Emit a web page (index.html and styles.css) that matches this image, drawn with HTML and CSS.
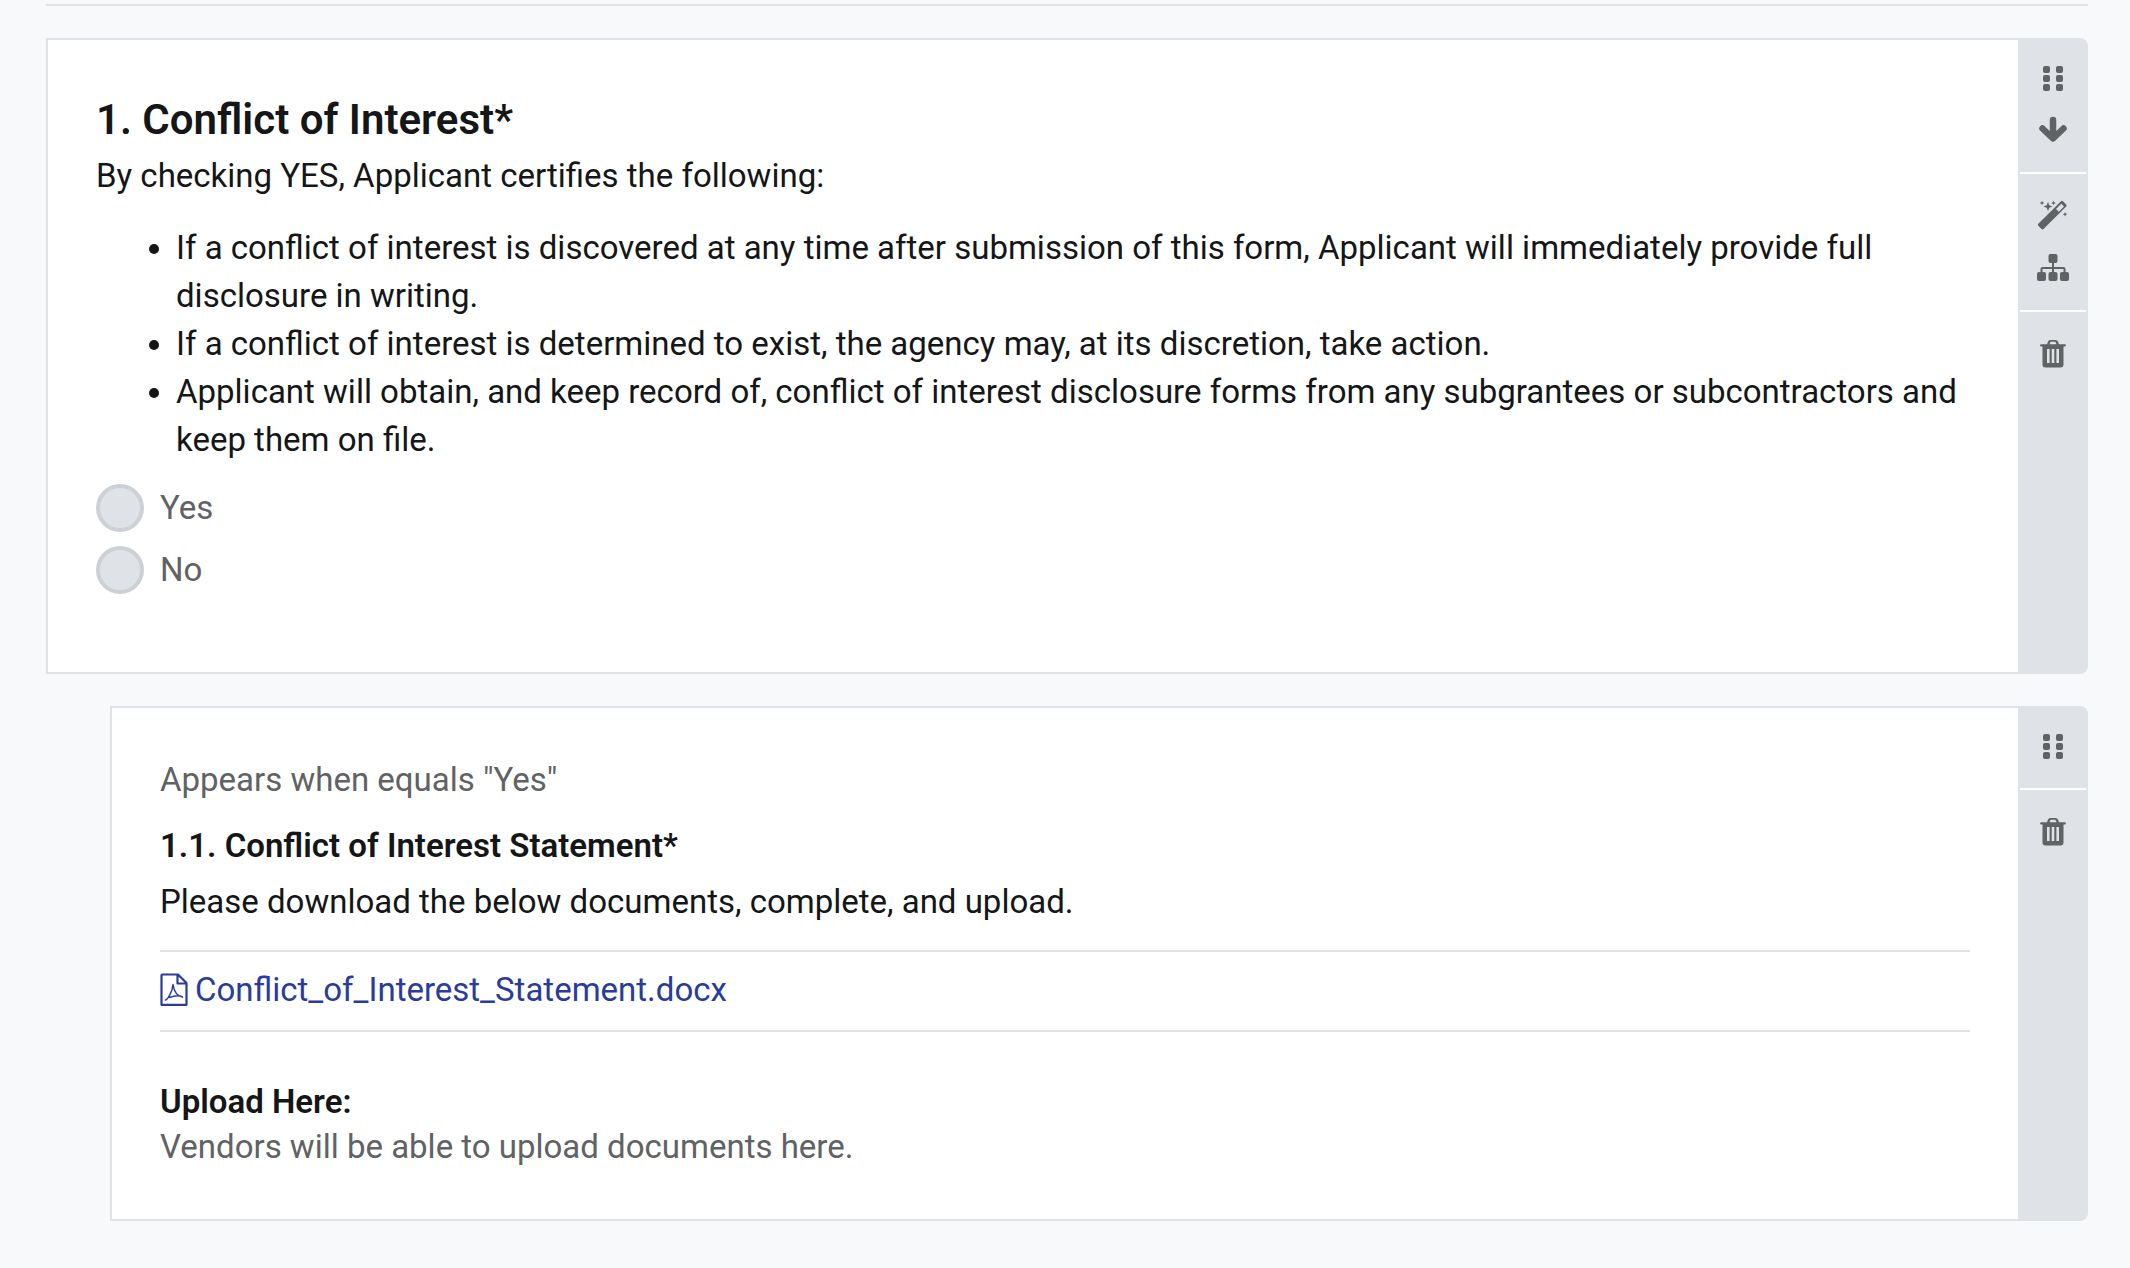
FILE: index.html
```html
<!DOCTYPE html>
<html lang="en">
<head>
  <meta charset="UTF-8">
  <meta name="viewport" content="width=device-width, initial-scale=1.0">
  <title>Questionnaire</title>
  <link rel="stylesheet" href="styles.css">
</head>
<body>
  <svg class="sprite" aria-hidden="true">
    <symbol id="icon-drag" viewBox="0 0 32 32">
      <rect x="6" y="4" width="7" height="7" rx="2"/>
      <rect x="19" y="4" width="7" height="7" rx="2"/>
      <rect x="6" y="13" width="7" height="7" rx="2"/>
      <rect x="19" y="13" width="7" height="7" rx="2"/>
      <rect x="6" y="22" width="7" height="7" rx="2"/>
      <rect x="19" y="22" width="7" height="7" rx="2"/>
    </symbol>
    <symbol id="icon-down" viewBox="0 0 32 32">
      <path fill="none" stroke="currentColor" stroke-width="6.500" stroke-linecap="round" stroke-linejoin="round" d="M16 6v17M5.500 14.500L16 24.500L26.500 14.500"/>
    </symbol>
    <symbol id="icon-magic" viewBox="0 0 32 32">
      <path fill-rule="evenodd" d="M24 1.300a1.500 1.500 0 0 1 2 0l3.200 3.200a1.500 1.500 0 0 1 0 2L6.500 29a1.500 1.500 0 0 1-2 0l-3.200-3.200a1.500 1.500 0 0 1 0-2zM19 8.900l2.800 2.800 5.200-5.300-2.700-2.700z"/>
      <path d="M11 2l1.300 3.200L15.500 6.500l-3.200 1.300L11 11l-1.300-3.200L6.500 6.500l3.200-1.300zM5 .7l.7 1.600 1.600.7-1.600.7L5 5.300 4.300 3.700l-1.600-.7 1.600-.7zM16.500.7l.7 1.600 1.600.7-1.600.7-.7 1.600-.7-1.600-1.600-.7 1.600-.7zM28 12l.7 1.600 1.600.7-1.600.7-.7 1.600-.7-1.600-1.600-.7 1.600-.7z"/>
    </symbol>
    <symbol id="icon-sitemap" viewBox="0 0 32 32">
      <rect x="11.500" y="2" width="9" height="9" rx="2"/>
      <rect x="0" y="20" width="9" height="9" rx="2"/>
      <rect x="11.500" y="20" width="9" height="9" rx="2"/>
      <rect x="23" y="20" width="9" height="9" rx="2"/>
      <path d="M15 10h2v5h9.500a2 2 0 0 1 2 2v4h-2v-4H17v4h-2v-4H5.500v4h-2v-4a2 2 0 0 1 2-2H15z"/>
    </symbol>
    <symbol id="icon-trash" viewBox="0 0 32 32">
      <path fill-rule="evenodd" d="M10 6.200l1-2.700A2.500 2.500 0 0 1 13.300 2h5.400a2.500 2.500 0 0 1 2.300 1.500l1 2.700h6a.8.800 0 0 1 .8.800v.8a.8.800 0 0 1-.8.800H26.500V26.500A3 3 0 0 1 23.500 29.500h-15a3 3 0 0 1-3-3V8.600H4a.8.800 0 0 1-.8-.8V7a.8.800 0 0 1 .8-.8zM12.500 6.200h7l-.8-2a.7.700 0 0 0-.6-.4h-4.200a.7.700 0 0 0-.6.400zM10 11v14h2.600V11zM14.700 11v14h2.600V11zM19.400 11v14H22V11z"/>
    </symbol>
    <symbol id="icon-pdf" viewBox="0 0 28 34">
      <path fill="none" stroke="currentColor" stroke-width="2.200" stroke-linejoin="round" d="M2.300 1.500H18l8.500 8.500v21.800H1.500V2.300zM17.500 1.500V10.500H26.500"/>
      <path fill="none" stroke="currentColor" stroke-width="1.500" stroke-linecap="round" stroke-linejoin="round" d="M5.500 27c2-.5 7-8 7.500-15.500 1 7 4 11.500 9.500 12.500-4-2-9-1-13 .5"/>
    </symbol>
  </svg>

  <main class="questions">
    <hr class="divider">

    <section class="card">
      <div class="card-body">
        <h2 class="title">1. Conflict of Interest*</h2>
        <p class="text">By checking YES, Applicant certifies the following:</p>
        <ul class="terms">
          <li>If a conflict of interest is discovered at any time after submission of this form, Applicant will immediately provide full disclosure in writing.</li>
          <li>If a conflict of interest is determined to exist, the agency may, at its discretion, take action.</li>
          <li>Applicant will obtain, and keep record of, conflict of interest disclosure forms from any subgrantees or subcontractors and keep them on file.</li>
        </ul>
        <div class="options">
          <label class="option"><input type="radio" name="conflict" value="yes" disabled>Yes</label>
          <label class="option"><input type="radio" name="conflict" value="no" disabled>No</label>
        </div>
      </div>
      <div class="tools">
        <div class="tool-group">
          <button type="button" aria-label="Drag"><svg><use href="#icon-drag"/></svg></button>
          <button type="button" aria-label="Move down"><svg><use href="#icon-down"/></svg></button>
        </div>
        <div class="tool-group">
          <button type="button" aria-label="Edit"><svg><use href="#icon-magic"/></svg></button>
          <button type="button" aria-label="Conditions"><svg><use href="#icon-sitemap"/></svg></button>
        </div>
        <div class="tool-group">
          <button type="button" aria-label="Delete"><svg><use href="#icon-trash"/></svg></button>
        </div>
      </div>
    </section>

    <section class="card card-nested">
      <div class="card-body">
        <p class="condition">Appears when equals "Yes"</p>
        <h3 class="subtitle">1.1. Conflict of Interest Statement*</h3>
        <p class="text">Please download the below documents, complete, and upload.</p>
        <div class="attachment">
          <a href="#"><svg><use href="#icon-pdf"/></svg>Conflict_of_Interest_Statement.docx</a>
        </div>
        <div class="upload">
          <h4>Upload Here:</h4>
          <p>Vendors will be able to upload documents here.</p>
        </div>
      </div>
      <div class="tools">
        <div class="tool-group">
          <button type="button" aria-label="Drag"><svg><use href="#icon-drag"/></svg></button>
        </div>
        <div class="tool-group">
          <button type="button" aria-label="Delete"><svg><use href="#icon-trash"/></svg></button>
        </div>
      </div>
    </section>
  </main>
</body>
</html>
```
FILE: styles.css
```css
* {
  box-sizing: border-box;
}
body {
  margin: 0;
  background-color: #f8f9fb;
  color: #141618;
  font-family: Roboto, "Liberation Sans", sans-serif;
  font-size: 33px;
  line-height: 48px;
}
h2, h3, h4, p, ul {
  margin: 0;
}
.sprite {
  display: none;
}
.questions {
  padding: 4px 42px 14px 46px;
}
.divider {
  margin: 0 0 32px;
  border: 0;
  border-top: 2px solid #dfe2e7;
}
.card {
  display: flex;
  margin-bottom: 32px;
  background-color: white;
  border: 2px solid #dfe2e7;
  border-radius: 0 8px 8px 0;
}
.card-nested {
  margin-left: 64px;
}
.card-body {
  flex: 1;
  padding: 56px 48px 78px;
}
.card-nested .card-body {
  padding: 48px 48px 50px;
}
.title {
  margin-bottom: 8px;
  font-size: 42px;
  font-weight: 600;
}
.terms {
  margin: 24px 0 20px;
  padding-left: 80px;
}
.options {
  display: flex;
  flex-direction: column;
  gap: 14px;
}
.option {
  display: flex;
  align-items: center;
  gap: 16px;
  color: #606264;
}
.option input {
  appearance: none;
  width: 48px;
  height: 48px;
  margin: 0;
  background-color: #dfe2e7;
  border: 4px solid #cdd1d6;
  border-radius: 50%;
}
.condition {
  margin-bottom: 18px;
  color: #606264;
}
.subtitle {
  margin-bottom: 8px;
  font-size: 33px;
  font-weight: 600;
}
.attachment {
  display: flex;
  margin: 24px 0 47px;
  padding: 14px 0 16px;
  border-top: 2px solid #dfe2e7;
  border-bottom: 2px solid #dfe2e7;
}
.attachment a {
  display: flex;
  align-items: center;
  gap: 7px;
  color: #293c9b;
  text-decoration: none;
}
.attachment svg {
  width: 28px;
  height: 34px;
}
.upload {
  line-height: 45px;
}
.upload h4 {
  font-size: 33px;
  font-weight: 600;
}
.upload p {
  color: #606264;
}

/* right-hand toolbar */
.tools {
  width: 68px;
  padding-left: 2px;
  background-color: #dfe2e7;
}
.tool-group {
  display: flex;
  flex-direction: column;
  padding: 16px 0;
}
.tool-group:first-child {
  padding-top: 12px;
}
.tool-group + .tool-group {
  border-top: 2px solid white;
}
.tools button {
  display: flex;
  align-items: center;
  justify-content: center;
  height: 52px;
  padding: 0;
  border: 0;
  background: none;
  color: #606264;
  cursor: pointer;
}
.tools svg {
  width: 32px;
  height: 32px;
  fill: currentColor;
}
```
